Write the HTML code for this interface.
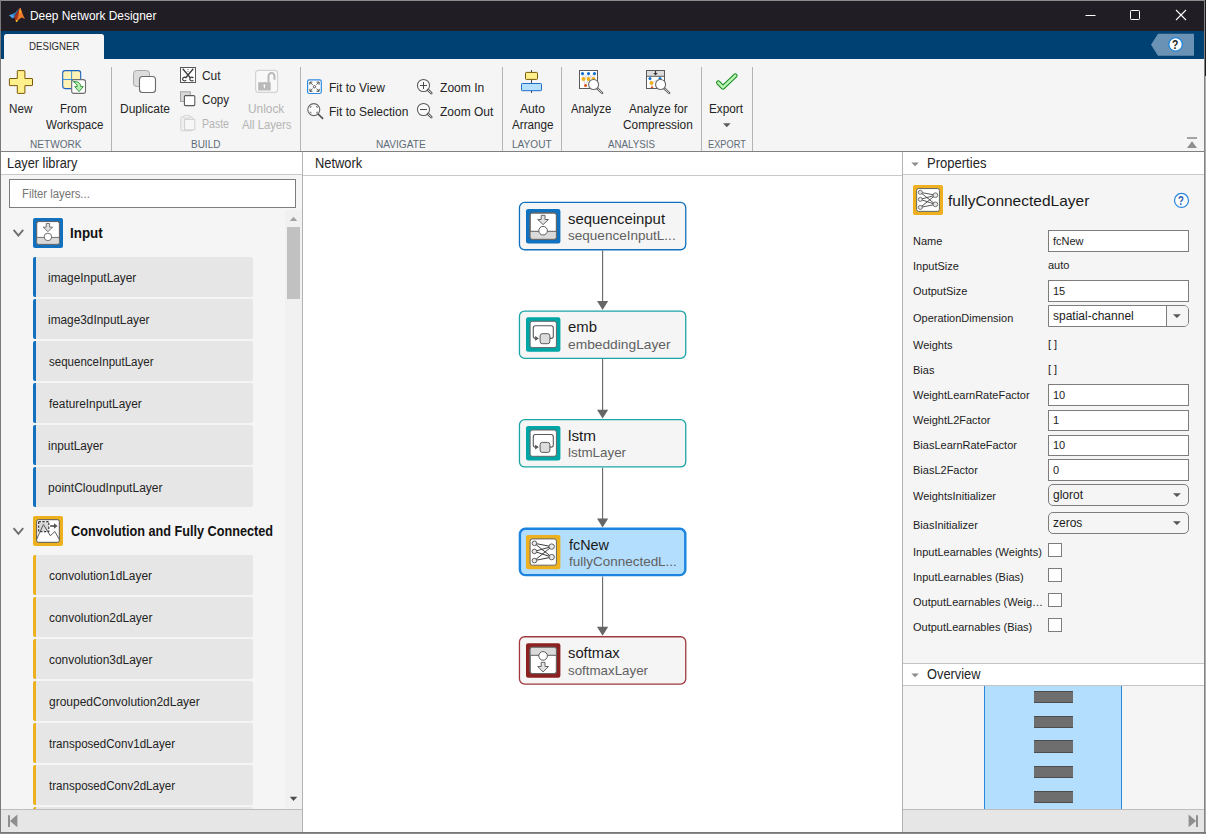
<!DOCTYPE html>
<html lang="en"><head><meta charset="utf-8"><title>Deep Network Designer</title>
<style>

html,body{margin:0;padding:0;}
body{width:1206px;height:834px;overflow:hidden;background:#6b6b6b;position:relative;font-family:"Liberation Sans",sans-serif;}
div,span{box-sizing:border-box;}
.a{position:absolute;}
#win{position:absolute;left:0;top:0;width:1204px;height:832px;background:#f5f5f5;overflow:hidden;}
.t{position:absolute;white-space:nowrap;line-height:20px;transform-origin:0 50%;display:block;font-family:"Liberation Sans",sans-serif;}
.sep{position:absolute;top:67px;width:1px;height:84px;background:#b4b4b4;}
.item{position:absolute;left:33px;width:220px;height:39.5px;background:#e6e6e6;border-radius:2px;}
.item.b{border-left:3px solid #1171be;}
.item.y{border-left:3px solid #edb120;}
.inp{position:absolute;left:1048px;width:141px;background:#fff;border:1px solid #7d7d7d;}
.dd{position:absolute;left:1048px;width:141px;background:#f5f5f5;border:1px solid #7d7d7d;border-radius:5px;}
.cb{position:absolute;left:1048px;width:14px;height:14px;background:#fff;border:1px solid #7d7d7d;}
.node{position:absolute;left:519px;width:167.5px;height:48.5px;background:#f5f5f5;border-radius:6px;}
svg{position:absolute;left:0;top:0;overflow:visible;}

</style></head>
<body>
<div id="win">
<div class="a" style="left:0;top:0;width:1204px;height:31px;background:#201e24;"></div>
<div class="a" style="left:0;top:31px;width:1204px;height:28px;background:#004173;"></div>
<div class="a" style="left:4px;top:34px;width:100px;height:26px;background:#f5f5f5;border-radius:2.5px 2.5px 0 0;"></div>
<div class="a" style="left:0;top:151px;width:1204px;height:1px;background:#808080;"></div>
<div class="sep" style="left:111px;"></div>
<div class="sep" style="left:300px;"></div>
<div class="sep" style="left:502px;"></div>
<div class="sep" style="left:561px;"></div>
<div class="sep" style="left:701px;"></div>
<div class="sep" style="left:752px;"></div>
<div class="a" style="left:1px;top:152px;width:301px;height:22px;background:#fff;"></div>
<div class="a" style="left:1px;top:174px;width:301px;height:1px;background:#c9c9c9;"></div>
<div class="a" style="left:303px;top:152px;width:599px;height:680px;background:#fff;"></div>
<div class="a" style="left:303px;top:175px;width:599px;height:1px;background:#c9c9c9;"></div>
<div class="a" style="left:903px;top:152px;width:301px;height:22px;background:#fff;"></div>
<div class="a" style="left:903px;top:174px;width:301px;height:1px;background:#c9c9c9;"></div>
<div class="a" style="left:302px;top:152px;width:1px;height:680px;background:#b2b2b2;"></div>
<div class="a" style="left:902px;top:152px;width:1px;height:680px;background:#b2b2b2;"></div>
<div class="a" style="left:9px;top:179px;width:287px;height:29px;background:#fff;border:1px solid #7d7d7d;"></div>
<div class="a" style="left:285px;top:210px;width:17px;height:599px;background:#f1f1f1;"></div>
<div class="a" style="left:287px;top:227px;width:13px;height:72px;background:#c1c1c1;"></div>
<div class="item b" style="top:257px;"></div>
<div class="item b" style="top:299px;"></div>
<div class="item b" style="top:341px;"></div>
<div class="item b" style="top:383px;"></div>
<div class="item b" style="top:425px;"></div>
<div class="item b" style="top:467px;"></div>
<div class="item y" style="top:555px;"></div>
<div class="item y" style="top:597px;"></div>
<div class="item y" style="top:639px;"></div>
<div class="item y" style="top:681px;"></div>
<div class="item y" style="top:723px;"></div>
<div class="item y" style="top:765px;"></div>
<div class="item y" style="top:807px;"></div>
<div class="a" style="left:1px;top:809px;width:301px;height:23px;background:#e6e6e6;border-top:1px solid #bdbdbd;"></div>
<div class="a" style="left:903px;top:809px;width:301px;height:23px;background:#e6e6e6;border-top:1px solid #bdbdbd;"></div>
<div class="inp" style="top:230px;height:22px;"></div>
<div class="inp" style="top:280px;height:22px;"></div>
<div class="inp" style="top:384px;height:21.5px;"></div>
<div class="inp" style="top:409.5px;height:21.5px;"></div>
<div class="inp" style="top:434.5px;height:21.5px;"></div>
<div class="inp" style="top:459.3px;height:21.5px;"></div>
<div class="dd" style="top:305px;height:22px;background:#fff;border-radius:0 5px 5px 0;"><div class="a" style="left:117px;top:0;width:22px;height:20px;background:#f5f5f5;border-left:1px solid #7d7d7d;border-radius:0 4px 4px 0;"></div></div>
<div class="dd" style="top:484px;height:22px;"></div>
<div class="dd" style="top:512px;height:22px;"></div>
<div class="cb" style="top:543px;"></div>
<div class="cb" style="top:568px;"></div>
<div class="cb" style="top:593px;"></div>
<div class="cb" style="top:618px;"></div>
<div class="a" style="left:903px;top:663px;width:301px;height:1px;background:#c4c4c4;"></div>
<div class="a" style="left:903px;top:664px;width:301px;height:21px;background:#fff;"></div>
<div class="a" style="left:903px;top:685px;width:301px;height:1px;background:#c4c4c4;"></div>
<div class="a" style="left:984px;top:686px;width:138px;height:123px;background:#b3defe;border-left:1px solid #2b86dc;border-right:1px solid #2b86dc;"></div>
<div class="a" style="left:1033.8px;top:690.8px;width:39.2px;height:12.4px;background:#6e6e6e;border-top:1px solid #4c4c4c;border-bottom:1px solid #4c4c4c;"></div>
<div class="a" style="left:1033.8px;top:715.5px;width:39.2px;height:12.4px;background:#6e6e6e;border-top:1px solid #4c4c4c;border-bottom:1px solid #4c4c4c;"></div>
<div class="a" style="left:1033.8px;top:740.4px;width:39.2px;height:12.4px;background:#6e6e6e;border-top:1px solid #4c4c4c;border-bottom:1px solid #4c4c4c;"></div>
<div class="a" style="left:1033.8px;top:765.5px;width:39.2px;height:12.4px;background:#6e6e6e;border-top:1px solid #4c4c4c;border-bottom:1px solid #4c4c4c;"></div>
<div class="a" style="left:1033.8px;top:790.5px;width:39.2px;height:12.4px;background:#6e6e6e;border-top:1px solid #4c4c4c;border-bottom:1px solid #4c4c4c;"></div>
<div class="a" style="left:903px;top:809px;width:301px;height:23px;background:#e6e6e6;border-top:1px solid #bdbdbd;"></div>
<div class="a" style="left:0;top:0;width:1204px;height:1px;background:#8c8c8c;"></div>
<div class="a" style="left:0;top:0;width:1px;height:832px;background:#7a7a7a;"></div>
<svg width="1206" height="834" viewBox="0 0 1206 834">
<rect x="519.45" y="202.45" width="166.30" height="47.30" rx="5.2" fill="#f5f5f5" stroke="#1171be" stroke-width="1.3"/>
<rect x="519.45" y="311.05" width="166.30" height="47.30" rx="5.2" fill="#f5f5f5" stroke="#1ba5a5" stroke-width="1.3"/>
<rect x="519.45" y="419.65" width="166.30" height="47.30" rx="5.2" fill="#f5f5f5" stroke="#1ba5a5" stroke-width="1.3"/>
<rect x="519.90" y="528.70" width="165.40" height="46.40" rx="5.4" fill="#b3defe" stroke="#1d84de" stroke-width="2.4"/>
<rect x="519.45" y="636.75" width="166.30" height="47.30" rx="5.2" fill="#f5f5f5" stroke="#a2393d" stroke-width="1.3"/>
<line x1="602.6" y1="250.50" x2="602.6" y2="304.00" stroke="#666" stroke-width="1.1"/>
<path d="M597 301.10H608.2L602.6 310.00Z" fill="#666"/>
<line x1="602.6" y1="359.10" x2="602.6" y2="412.60" stroke="#666" stroke-width="1.1"/>
<path d="M597 409.70H608.2L602.6 418.60Z" fill="#666"/>
<line x1="602.6" y1="467.70" x2="602.6" y2="521.40" stroke="#666" stroke-width="1.1"/>
<path d="M597 518.50H608.2L602.6 527.40Z" fill="#666"/>
<line x1="602.6" y1="576.50" x2="602.6" y2="629.70" stroke="#666" stroke-width="1.1"/>
<path d="M597 626.80H608.2L602.6 635.70Z" fill="#666"/>
<rect x="526.00" y="209.00" width="34.40" height="34.40" rx="2.20" fill="#1171be"/>
<clipPath id="c526_209"><rect x="530.10" y="213.00" width="26.30" height="26.30" rx="2.20"/></clipPath>
<rect x="530.10" y="213.00" width="26.30" height="26.30" rx="2.20" fill="#fff" stroke="#666" stroke-width="1"/>
<rect clip-path="url(#c526_209)" x="529.60" y="231.30" width="27.30" height="8.50" fill="#dadada"/>
<line x1="529.60" y1="231.30" x2="556.90" y2="231.30" stroke="#606060" stroke-width="1.00"/>
<rect x="530.10" y="213.00" width="26.30" height="26.30" rx="2.20" fill="none" stroke="#666" stroke-width="1"/>
<circle cx="543.10" cy="230.70" r="4.30" fill="#fff" stroke="#5c5c5c" stroke-width="1.00"/>
<path d="M541.20 215.30H545.00V219.50H548.50L543.10 224.60L537.70 219.50H541.20Z" fill="#e2e2e2" stroke="#646464" stroke-width="1.00" stroke-linejoin="miter"/>
<rect x="526.00" y="317.30" width="34.40" height="34.40" rx="2.20" fill="#00a5a5"/>
<rect x="530.10" y="321.30" width="26.30" height="26.30" rx="2.20" fill="#fff" stroke="#666" stroke-width="1"/>
<path d="M550.00 338.40H551.10Q553.30 338.40 553.30 336.20V328.00Q553.30 325.80 551.10 325.80H535.50Q533.30 325.80 533.30 328.00V336.20Q533.30 338.40 535.50 338.40H536.00" fill="none" stroke="#5a5a5a" stroke-width="1.10"/>
<path d="M535.10 336.00L538.90 338.40L535.10 340.80Z" fill="#555"/>
<rect x="540.10" y="333.70" width="9.80" height="10.00" rx="2.20" fill="#dcdcdc" stroke="#5a5a5a" stroke-width="1.00"/>
<rect x="526.00" y="426.00" width="34.40" height="34.40" rx="2.20" fill="#00a5a5"/>
<rect x="530.10" y="430.00" width="26.30" height="26.30" rx="2.20" fill="#fff" stroke="#666" stroke-width="1"/>
<path d="M550.00 447.10H551.10Q553.30 447.10 553.30 444.90V436.70Q553.30 434.50 551.10 434.50H535.50Q533.30 434.50 533.30 436.70V444.90Q533.30 447.10 535.50 447.10H536.00" fill="none" stroke="#5a5a5a" stroke-width="1.10"/>
<path d="M535.10 444.70L538.90 447.10L535.10 449.50Z" fill="#555"/>
<rect x="540.10" y="442.40" width="9.80" height="10.00" rx="2.20" fill="#dcdcdc" stroke="#5a5a5a" stroke-width="1.00"/>
<rect x="526.00" y="534.90" width="34.40" height="34.40" rx="2.20" fill="#edb120"/>
<rect x="530.10" y="538.90" width="26.30" height="26.30" rx="2.20" fill="#fff" stroke="#666" stroke-width="1"/>
<line x1="534.40" y1="543.30" x2="551.70" y2="546.60" stroke="#3e3e3e" stroke-width="1.00"/>
<line x1="534.40" y1="543.30" x2="551.70" y2="557.10" stroke="#3e3e3e" stroke-width="1.00"/>
<line x1="534.40" y1="551.40" x2="551.70" y2="546.60" stroke="#3e3e3e" stroke-width="1.00"/>
<line x1="534.40" y1="551.40" x2="551.70" y2="557.10" stroke="#3e3e3e" stroke-width="1.00"/>
<line x1="534.40" y1="560.60" x2="551.70" y2="546.60" stroke="#3e3e3e" stroke-width="1.00"/>
<line x1="534.40" y1="560.60" x2="551.70" y2="557.10" stroke="#3e3e3e" stroke-width="1.00"/>
<circle cx="534.40" cy="543.30" r="2.30" fill="#e8e8e8" stroke="#505050" stroke-width="0.90"/>
<circle cx="534.40" cy="551.40" r="2.30" fill="#e8e8e8" stroke="#505050" stroke-width="0.90"/>
<circle cx="534.40" cy="560.60" r="2.30" fill="#e8e8e8" stroke="#505050" stroke-width="0.90"/>
<circle cx="551.70" cy="546.60" r="2.70" fill="#e8e8e8" stroke="#505050" stroke-width="0.90"/>
<circle cx="551.70" cy="557.10" r="2.70" fill="#e8e8e8" stroke="#505050" stroke-width="0.90"/>
<rect x="526.00" y="643.30" width="34.40" height="34.40" rx="2.20" fill="#8c2121"/>
<clipPath id="c526_643"><rect x="530.10" y="647.30" width="26.30" height="26.30" rx="2.20"/></clipPath>
<rect x="530.10" y="647.30" width="26.30" height="26.30" rx="2.20" fill="#fff" stroke="#666" stroke-width="1"/>
<rect clip-path="url(#c526_643)" x="529.60" y="646.80" width="27.30" height="8.50" fill="#dadada"/>
<line x1="529.60" y1="655.30" x2="556.90" y2="655.30" stroke="#606060" stroke-width="1.00"/>
<rect x="530.10" y="647.30" width="26.30" height="26.30" rx="2.20" fill="none" stroke="#666" stroke-width="1"/>
<circle cx="543.10" cy="655.90" r="4.30" fill="#fff" stroke="#5c5c5c" stroke-width="1.00"/>
<path d="M541.20 662.30H545.00V666.50H548.50L543.10 671.90L537.70 666.50H541.20Z" fill="#e2e2e2" stroke="#646464" stroke-width="1.00" stroke-linejoin="miter"/>
<rect x="33.00" y="218.00" width="30.00" height="30.00" rx="1.92" fill="#1171be"/>
<clipPath id="c33_218"><rect x="36.64" y="221.55" width="22.81" height="22.81" rx="1.92"/></clipPath>
<rect x="36.64" y="221.55" width="22.81" height="22.81" rx="1.92" fill="#fff" stroke="#666" stroke-width="1"/>
<rect clip-path="url(#c33_218)" x="36.14" y="237.45" width="23.81" height="7.41" fill="#dadada"/>
<line x1="36.14" y1="237.45" x2="59.95" y2="237.45" stroke="#606060" stroke-width="0.87"/>
<rect x="36.64" y="221.55" width="22.81" height="22.81" rx="1.92" fill="none" stroke="#666" stroke-width="1"/>
<circle cx="47.91" cy="236.92" r="3.75" fill="#fff" stroke="#5c5c5c" stroke-width="0.87"/>
<path d="M46.26 223.49H49.57V227.16H52.62L47.91 231.60L43.20 227.16H46.26Z" fill="#e2e2e2" stroke="#646464" stroke-width="0.87" stroke-linejoin="miter"/>
<rect x="33.00" y="516.00" width="30.00" height="30.00" rx="2" fill="#edb120"/>
<rect x="36.70" y="519.70" width="22.60" height="22.60" rx="1.6" fill="#fff" stroke="#585858" stroke-width="1"/>
<rect x="38.60" y="521.60" width="10.2" height="10" fill="#d9d9d9" stroke="#3a3a3a" stroke-width="1.2" stroke-dasharray="2.3 1.5"/>
<path d="M36.70 539.00L43.40 524.50L50.40 535.80L54.70 531.50L59.40 539.40" fill="none" stroke="#4a4a4a" stroke-width="0.9"/>
<path d="M50.20 526.00H55.00" stroke="#555" stroke-width="1.7"/>
<path d="M54.00 523.30L57.60 526.00L54.00 528.70Z" fill="#555"/>
<rect x="913.00" y="185.00" width="30.00" height="30.00" rx="1.92" fill="#edb120"/>
<rect x="916.64" y="188.55" width="22.81" height="22.81" rx="1.92" fill="#fff" stroke="#666" stroke-width="1"/>
<line x1="920.33" y1="192.33" x2="935.41" y2="195.20" stroke="#3e3e3e" stroke-width="0.87"/>
<line x1="920.33" y1="192.33" x2="935.41" y2="204.36" stroke="#3e3e3e" stroke-width="0.87"/>
<line x1="920.33" y1="199.39" x2="935.41" y2="195.20" stroke="#3e3e3e" stroke-width="0.87"/>
<line x1="920.33" y1="199.39" x2="935.41" y2="204.36" stroke="#3e3e3e" stroke-width="0.87"/>
<line x1="920.33" y1="207.41" x2="935.41" y2="195.20" stroke="#3e3e3e" stroke-width="0.87"/>
<line x1="920.33" y1="207.41" x2="935.41" y2="204.36" stroke="#3e3e3e" stroke-width="0.87"/>
<circle cx="920.33" cy="192.33" r="2.01" fill="#e8e8e8" stroke="#505050" stroke-width="0.78"/>
<circle cx="920.33" cy="199.39" r="2.01" fill="#e8e8e8" stroke="#505050" stroke-width="0.78"/>
<circle cx="920.33" cy="207.41" r="2.01" fill="#e8e8e8" stroke="#505050" stroke-width="0.78"/>
<circle cx="935.41" cy="195.20" r="2.35" fill="#e8e8e8" stroke="#505050" stroke-width="0.78"/>
<circle cx="935.41" cy="204.36" r="2.35" fill="#e8e8e8" stroke="#505050" stroke-width="0.78"/>
<path d="M1085.5 15.5H1095.5" stroke="#fff" stroke-width="1"/>
<rect x="1130.5" y="10.5" width="9" height="9" rx="0.8" fill="none" stroke="#fff" stroke-width="1"/>
<path d="M1176 10L1186 20M1186 10L1176 20" stroke="#fff" stroke-width="1.1"/>
<path d="M8.9 15.3L12.6 13.9L15 13L14.6 16.8L12.6 18.4Z" fill="#4a9fea"/>
<path d="M12.6 13.9L15.3 12.6L18.7 8.7L19.5 8.1L18 11L16 13.8L14.4 17.3L13.4 15.2Z" fill="#2a76b8"/>
<path d="M14.2 17.6L16.2 13.6L18.2 10.6L19.7 7.9L20.2 13L17.6 19L16.4 22.1L15.2 19.6Z" fill="#a9321a"/>
<path d="M19.7 7.9L20.7 8C21.6 11 23 15.4 25 19.3C23.6 18.1 22.4 17.4 21.2 17.8C19.7 18.4 18.3 20.6 16.4 22.2C17.9 18 18.9 13 19.7 7.9Z" fill="#ee7b2c"/>
<ellipse cx="20.2" cy="11.6" rx="0.8" ry="2" fill="#f7b322"/><ellipse cx="16.6" cy="20.9" rx="0.9" ry="1.1" fill="#f8c425"/>
<path d="M1151 44.8L1158 33.8H1194V55.8H1158Z" fill="#6a92b4"/>
<circle cx="1175.6" cy="44.4" r="6.7" fill="#fff" stroke="#1f86dc" stroke-width="1.3"/>
<path d="M1187 138H1197" stroke="#8e8e8e" stroke-width="1.6"/><path d="M1187 148L1192 141.3L1197 148Z" fill="#8e8e8e"/>
<path d="M8 815.3H10V827H8Z" fill="#8e8e8e"/><path d="M17.4 814.6V827.3L9.9 820.9Z" fill="#8e8e8e"/>
<path d="M1196 815.3H1198V827H1196Z" fill="#8e8e8e"/><path d="M1188.6 814.6V827.3L1196.1 820.9Z" fill="#8e8e8e"/>
<path d="M289.8 221L293.5 216.7L297.3 221Z" fill="#a3a3a3"/>
<path d="M289.8 796.8L293.5 801.1L297.3 796.8Z" fill="#505050"/>
<path d="M13.6 229.9L18.4 235.6L23.2 229.9" fill="none" stroke="#6e6e6e" stroke-width="1.9"/>
<path d="M13.6 528.2L18.4 533.9L23.2 528.2" fill="none" stroke="#6e6e6e" stroke-width="1.9"/>
<path d="M911.3 162.4H918.8L915.05 166.3Z" fill="#8c8c8c"/>
<path d="M911.3 673.4H918.8L915.05 677.2Z" fill="#8c8c8c"/>
<path d="M1173 314.3H1180.8L1176.9 318.0Z" fill="#555"/>
<path d="M1173 493.3H1180.8L1176.9 497.0Z" fill="#555"/>
<path d="M1173 521.3H1180.8L1176.9 525.0Z" fill="#555"/>
<path d="M723 123.2H730.6L726.8 127.2Z" fill="#5a5a5a"/>
<circle cx="1181.5" cy="200.4" r="7" fill="#fff" stroke="#2a86de" stroke-width="1.25"/>
<path d="M17.8 70.6H24.4Q24.9 70.6 24.9 71.1V78.5H32Q32.5 78.5 32.5 79V85.1Q32.5 85.6 32 85.6H24.9V92.9Q24.9 93.4 24.4 93.4H17.8Q17.3 93.4 17.3 92.9V85.6H9.9Q9.4 85.6 9.4 85.1V79Q9.4 78.5 9.9 78.5H17.3V71.1Q17.3 70.6 17.8 70.6Z" fill="#fff08c" stroke="#7a5a08" stroke-width="1"/>
<rect x="62.7" y="70.6" width="18" height="18" rx="2.5" fill="#fff3b5" stroke="#1f62bd" stroke-width="1.1"/>
<path d="M71.6 71V88.2M63 79.5H80.5" stroke="#2b8ae0" stroke-width="0.9"/>
<rect x="71.7" y="79.6" width="13.8" height="13.8" rx="2.2" fill="#fff" stroke="#6e6e6e" stroke-width="1.1"/>
<path d="M73.2 81.6C78 81.2 80.6 83 80.8 86.6H83.3L79 91.6L74.7 86.6H77.2C77.2 84.6 76 83.2 73.2 81.6Z" fill="#b7efb0" stroke="#1f8f2a" stroke-width="0.9" stroke-linejoin="round"/>
<rect x="133.5" y="70.5" width="16" height="16" rx="3" fill="#dcdcdc" stroke="#a8a8a8" stroke-width="1"/>
<rect x="139.5" y="76.5" width="16" height="16" rx="3" fill="#fff" stroke="#6a6a6a" stroke-width="1.1"/>
<rect x="180.5" y="67.5" width="15" height="15" fill="#fff" stroke="#585858" stroke-width="1"/>
<path d="M182.7 68.8L190.3 77.7M193.3 68.8L185.7 77.7" stroke="#3c3c3c" stroke-width="1.35" fill="none"/>
<path d="M186.2 78A2 1.75 0 1 0 186.2 80.2M193.4 78A2 1.75 0 1 0 193.4 80.2" stroke="#3c3c3c" stroke-width="1.15" fill="none"/>
<circle cx="188" cy="69.6" r="0.5" fill="#444"/><circle cx="188" cy="71.4" r="0.5" fill="#444"/>
<rect x="180.5" y="91.8" width="9.8" height="9.6" fill="#d9d9d9" stroke="#a2a2a2" stroke-width="1"/>
<rect x="184.4" y="95.6" width="10.4" height="10" rx="1" fill="#fff" stroke="#5a5a5a" stroke-width="1.1"/>
<rect x="180.8" y="116.8" width="11.6" height="14" rx="1" fill="#efefef" stroke="#d2d2d2" stroke-width="1"/>
<rect x="183.6" y="115.4" width="6" height="2.6" rx="0.8" fill="#f1f1f1" stroke="#d2d2d2" stroke-width="0.9"/>
<rect x="184.6" y="119.4" width="10.2" height="10.4" fill="#f7f7f7" stroke="#d0d0d0" stroke-width="1"/>
<rect x="255.6" y="70.4" width="22" height="22" rx="3" fill="#f8f8f8" stroke="#d2d2d2" stroke-width="1.1"/>
<rect x="258.2" y="82.2" width="12.5" height="8.3" fill="#b9b9b9"/>
<path d="M268.5 82.2V76.4A3 3.4 0 0 1 274.5 76.4V79.8" fill="none" stroke="#b9b9b9" stroke-width="2"/>
<circle cx="264.4" cy="85.4" r="1" fill="#fff"/><rect x="263.9" y="85.6" width="1" height="2.6" fill="#fff"/>
<rect x="307.6" y="79.8" width="13.7" height="13.7" rx="1.8" fill="#fff" stroke="#2b8ae0" stroke-width="1.2"/>
<path d="M310.2 82.4L312.6 84.8M318.8 82.4L316.4 84.8M310.2 91L312.6 88.6M318.8 91L316.4 88.6" stroke="#4a4a4a" stroke-width="0.95"/>
<path d="M309.9 84.6V82.1H312.4M316.6 82.1H319.1V84.6M319.1 88.8V91.3H316.6M312.4 91.3H309.9V88.8" fill="none" stroke="#4a4a4a" stroke-width="1.0"/>
<circle cx="314.5" cy="86.7" r="1.15" fill="none" stroke="#444" stroke-width="0.9"/>
<circle cx="313.8" cy="109.6" r="6" fill="#fbfbfb" stroke="#666" stroke-width="1.1"/>
<path d="M318.3 114.2L322.6 118.4" stroke="#4a4a4a" stroke-width="1.6" stroke-linecap="round"/>
<path d="M310.3 107.9V106.6H311.6M316 106.6H317.3V107.9M317.3 111.6V112.9H316M311.6 112.9H310.3V111.6" fill="none" stroke="#777" stroke-width="1"/>
<circle cx="423.5" cy="85.5" r="6.05" fill="#fbfbfb" stroke="#5a5a5a" stroke-width="1.05"/>
<path d="M420 85.5H427" stroke="#4a4a4a" stroke-width="1"/>
<path d="M423.5 82.0V89.0" stroke="#4a4a4a" stroke-width="1"/>
<path d="M428.1 90.0L431.3 93.1" stroke="#5a5a5a" stroke-width="2.6" stroke-linecap="round"/>
<path d="M428.3 90.2L431.1 92.9" stroke="#e4e4e4" stroke-width="1" stroke-linecap="round"/>
<circle cx="423.5" cy="109.5" r="6.05" fill="#fbfbfb" stroke="#5a5a5a" stroke-width="1.05"/>
<path d="M420 109.5H427" stroke="#4a4a4a" stroke-width="1"/>
<path d="M428.1 114.0L431.3 117.1" stroke="#5a5a5a" stroke-width="2.6" stroke-linecap="round"/>
<path d="M428.3 114.2L431.1 116.9" stroke="#e4e4e4" stroke-width="1" stroke-linecap="round"/>
<path d="M531.5 70V93" stroke="#4a4a4a" stroke-width="1"/>
<rect x="525.5" y="72.4" width="12" height="7" rx="0.8" fill="#fff08c" stroke="#7a5a08" stroke-width="1"/>
<rect x="521.5" y="83.5" width="20" height="7.2" rx="0.8" fill="#b5e0ff" stroke="#1f6ec8" stroke-width="1"/>
<rect x="579.5" y="70.5" width="18" height="18" fill="#fff" stroke="#5a5a5a" stroke-width="1"/>
<path d="M582.5 73.5L583.5 79L585.5 85.5L588.5 79L588.5 73.5M582.5 73.5L588.5 79L594.5 73.5L593.5 79M588.5 73.5L583.5 79M588.5 73.5L593.5 79" fill="none" stroke="#c9c9c9" stroke-width="0.8"/>
<circle cx="582.5" cy="73.6" r="1.6" fill="#1171d0"/>
<circle cx="588.5" cy="73.6" r="1.6" fill="#1171d0"/>
<circle cx="594.5" cy="73.6" r="1.6" fill="#1171d0"/>
<circle cx="583.5" cy="79" r="2" fill="#edb120"/>
<circle cx="588.5" cy="79" r="2" fill="#edb120"/>
<circle cx="593.5" cy="79" r="2" fill="#edb120"/>
<circle cx="585.5" cy="85.5" r="1.5" fill="#e2521a"/>
<path d="M597.2 88.3L602.2 93" stroke="#5e5e5e" stroke-width="2.4" stroke-linecap="round"/>
<path d="M597.6 88.7L602 92.8" stroke="#e6e6e6" stroke-width="0.9" stroke-linecap="round"/>
<circle cx="593.6" cy="84.5" r="5" fill="#fff" stroke="#6a6a6a" stroke-width="1.1"/>
<rect x="646.5" y="70.5" width="18" height="18" fill="#fff" stroke="#5a5a5a" stroke-width="1"/>
<rect x="647" y="71" width="17" height="5" fill="#dcdcdc"/>
<path d="M646.5 76.3H664.5" stroke="#5a5a5a" stroke-width="1"/>
<path d="M655.5 71V73.2" stroke="#333" stroke-width="1.2"/><path d="M653.3 72.9H657.7L655.5 75.4Z" fill="#333"/>
<path d="M650 78.5L651.5 83L652 87.5M660 78.5L651.5 83" fill="none" stroke="#c9c9c9" stroke-width="0.8"/>
<circle cx="650" cy="78.4" r="1.5" fill="#1171d0"/><circle cx="660" cy="78.4" r="1.5" fill="#1171d0"/>
<circle cx="651.5" cy="83" r="2" fill="#edb120"/>
<path d="M650.5 88L652 85.8L653.5 88Z" fill="#e2521a"/>
<path d="M664.2 88.3L669.2 93" stroke="#5e5e5e" stroke-width="2.4" stroke-linecap="round"/>
<path d="M664.6 88.7L669 92.8" stroke="#e6e6e6" stroke-width="0.9" stroke-linecap="round"/>
<circle cx="660.6" cy="84.5" r="5" fill="#fff" stroke="#6a6a6a" stroke-width="1.1"/>
<path d="M718.3 82.6L723 87.4L735.3 75.6" fill="none" stroke="#178a20" stroke-width="4.6" stroke-linecap="round" stroke-linejoin="round"/>
<path d="M718.3 82.6L723 87.4L735.3 75.6" fill="none" stroke="#b9f4b4" stroke-width="2.5" stroke-linecap="round" stroke-linejoin="round"/>
</svg>
</div>
<div class="a" style="left:1204px;top:0;width:1px;height:834px;background:#828282;"></div><div class="a" style="left:1205px;top:0;width:1px;height:834px;background:#b0b0b0;"></div><div class="a" style="left:1205px;top:0;width:1px;height:76px;background:#1d1d1d;"></div><div class="a" style="left:0;top:832px;width:1206px;height:1px;background:#787878;"></div><div class="a" style="left:0;top:833px;width:1206px;height:1px;background:#8a8a8a;"></div>
<div id="texts">
<span class="t" id="t0" style="left:30.00px;top:6px;font-size:12px;color:#ffffff;transform:scaleX(0.9920);">Deep Network Designer</span>
<span class="t" id="t1" style="left:29.00px;top:36px;font-size:11.5px;color:#2b2b2b;transform:scaleX(0.8416);">DESIGNER</span>
<span class="t" id="t2" style="left:9.00px;top:99px;font-size:12px;color:#242424;transform:scaleX(0.9712);">New</span>
<span class="t" id="t3" style="left:60.00px;top:99px;font-size:12px;color:#242424;transform:scaleX(0.9561);">From</span>
<span class="t" id="t4" style="left:46.00px;top:115px;font-size:12px;color:#242424;transform:scaleX(0.9596);">Workspace</span>
<span class="t" id="t5" style="left:120.00px;top:99px;font-size:12px;color:#242424;">Duplicate</span>
<span class="t" id="t6" style="left:202.00px;top:66px;font-size:12px;color:#242424;transform:scaleX(0.9931);">Cut</span>
<span class="t" id="t7" style="left:202.00px;top:90px;font-size:12px;color:#242424;transform:scaleX(0.9675);">Copy</span>
<span class="t" id="t8" style="left:329.00px;top:78px;font-size:12px;color:#242424;">Fit to View</span>
<span class="t" id="t9" style="left:329.00px;top:102px;font-size:12px;color:#242424;">Fit to Selection</span>
<span class="t" id="t10" style="left:440.00px;top:78px;font-size:12px;color:#242424;transform:scaleX(1.0066);">Zoom In</span>
<span class="t" id="t11" style="left:440.00px;top:102px;font-size:12px;color:#242424;">Zoom Out</span>
<span class="t" id="t12" style="left:520.00px;top:99px;font-size:12px;color:#242424;transform:scaleX(1.0111);">Auto</span>
<span class="t" id="t13" style="left:512.00px;top:115px;font-size:12px;color:#242424;transform:scaleX(0.9710);">Arrange</span>
<span class="t" id="t14" style="left:571.00px;top:99px;font-size:12px;color:#242424;transform:scaleX(0.9407);">Analyze</span>
<span class="t" id="t15" style="left:629.00px;top:99px;font-size:12px;color:#242424;transform:scaleX(0.9757);">Analyze for</span>
<span class="t" id="t16" style="left:623.00px;top:115px;font-size:12px;color:#242424;transform:scaleX(0.9874);">Compression</span>
<span class="t" id="t17" style="left:709.00px;top:99px;font-size:12px;color:#242424;transform:scaleX(0.9791);">Export</span>
<span class="t" id="t18" style="left:202.00px;top:114px;font-size:12px;color:#b4b4b4;transform:scaleX(0.8775);">Paste</span>
<span class="t" id="t19" style="left:248.00px;top:99px;font-size:12px;color:#b4b4b4;transform:scaleX(0.9900);">Unlock</span>
<span class="t" id="t20" style="left:242.00px;top:115px;font-size:12px;color:#b4b4b4;transform:scaleX(0.9393);">All Layers</span>
<span class="t" id="t21" style="left:30.00px;top:134px;font-size:10.8px;color:#5f6b77;transform:scaleX(0.9336);">NETWORK</span>
<span class="t" id="t22" style="left:191.00px;top:134px;font-size:10.8px;color:#5f6b77;transform:scaleX(0.9250);">BUILD</span>
<span class="t" id="t23" style="left:376.00px;top:134px;font-size:10.8px;color:#5f6b77;transform:scaleX(0.9375);">NAVIGATE</span>
<span class="t" id="t24" style="left:512.00px;top:134px;font-size:10.8px;color:#5f6b77;transform:scaleX(0.9329);">LAYOUT</span>
<span class="t" id="t25" style="left:608.00px;top:134px;font-size:10.8px;color:#5f6b77;transform:scaleX(0.9028);">ANALYSIS</span>
<span class="t" id="t26" style="left:708.00px;top:134px;font-size:10.8px;color:#5f6b77;transform:scaleX(0.8546);">EXPORT</span>
<span class="t" id="t27" style="left:7.00px;top:153px;font-size:14px;color:#242424;transform:scaleX(0.9152);">Layer library</span>
<span class="t" id="t28" style="left:315.00px;top:153px;font-size:14px;color:#242424;transform:scaleX(0.9179);">Network</span>
<span class="t" id="t29" style="left:927.00px;top:153px;font-size:14px;color:#242424;transform:scaleX(0.9308);">Properties</span>
<span class="t" id="t30" style="left:927.00px;top:664px;font-size:14px;color:#242424;transform:scaleX(0.9158);">Overview</span>
<span class="t" id="t31" style="left:22.00px;top:184px;font-size:12px;color:#757575;transform:scaleX(0.9411);">Filter layers...</span>
<span class="t" id="t32" style="left:70.00px;top:223px;font-size:14px;color:#111;font-weight:700;transform:scaleX(0.9553);">Input</span>
<span class="t" id="t33" style="left:71.00px;top:521px;font-size:14px;color:#111;font-weight:700;transform:scaleX(0.9053);">Convolution and Fully Connected</span>
<span class="t" id="t34" style="left:48.00px;top:268px;font-size:12px;color:#242424;transform:scaleX(0.9880);">imageInputLayer</span>
<span class="t" id="t35" style="left:48.00px;top:310px;font-size:12px;color:#242424;transform:scaleX(0.9872);">image3dInputLayer</span>
<span class="t" id="t36" style="left:49.00px;top:352px;font-size:12px;color:#242424;transform:scaleX(0.9611);">sequenceInputLayer</span>
<span class="t" id="t37" style="left:49.00px;top:394px;font-size:12px;color:#242424;transform:scaleX(0.9849);">featureInputLayer</span>
<span class="t" id="t38" style="left:48.00px;top:436px;font-size:12px;color:#242424;transform:scaleX(0.9867);">inputLayer</span>
<span class="t" id="t39" style="left:48.00px;top:478px;font-size:12px;color:#242424;transform:scaleX(1.0043);">pointCloudInputLayer</span>
<span class="t" id="t40" style="left:49.00px;top:566px;font-size:12px;color:#242424;transform:scaleX(0.9891);">convolution1dLayer</span>
<span class="t" id="t41" style="left:49.00px;top:608px;font-size:12px;color:#242424;transform:scaleX(0.9934);">convolution2dLayer</span>
<span class="t" id="t42" style="left:49.00px;top:650px;font-size:12px;color:#242424;transform:scaleX(0.9934);">convolution3dLayer</span>
<span class="t" id="t43" style="left:49.00px;top:692px;font-size:12px;color:#242424;">groupedConvolution2dLayer</span>
<span class="t" id="t44" style="left:49.00px;top:734px;font-size:12px;color:#242424;transform:scaleX(0.9640);">transposedConv1dLayer</span>
<span class="t" id="t45" style="left:49.00px;top:776px;font-size:12px;color:#242424;transform:scaleX(0.9640);">transposedConv2dLayer</span>
<span class="t" id="t46" style="left:568.00px;top:209px;font-size:15px;color:#1a1a1a;transform:scaleX(0.9946);">sequenceinput</span>
<span class="t" id="t47" style="left:568.00px;top:226px;font-size:13px;color:#616161;transform:scaleX(1.0414);">sequenceInputL...</span>
<span class="t" id="t48" style="left:568.00px;top:317px;font-size:15px;color:#1a1a1a;transform:scaleX(0.9932);">emb</span>
<span class="t" id="t49" style="left:568.00px;top:335px;font-size:13px;color:#616161;transform:scaleX(1.0595);">embeddingLayer</span>
<span class="t" id="t50" style="left:568.00px;top:426px;font-size:15px;color:#1a1a1a;transform:scaleX(1.0189);">lstm</span>
<span class="t" id="t51" style="left:568.00px;top:443px;font-size:13px;color:#616161;transform:scaleX(1.0308);">lstmLayer</span>
<span class="t" id="t52" style="left:569.00px;top:535px;font-size:15px;color:#1a1a1a;transform:scaleX(0.9598);">fcNew</span>
<span class="t" id="t53" style="left:569.00px;top:552px;font-size:13px;color:#616161;transform:scaleX(1.0363);">fullyConnectedL...</span>
<span class="t" id="t54" style="left:568.00px;top:643px;font-size:15px;color:#1a1a1a;transform:scaleX(0.9851);">softmax</span>
<span class="t" id="t55" style="left:568.00px;top:661px;font-size:13px;color:#616161;transform:scaleX(1.0253);">softmaxLayer</span>
<span class="t" id="t56" style="left:948.00px;top:191px;font-size:15px;color:#1a1a1a;transform:scaleX(1.0334);">fullyConnectedLayer</span>
<span class="t" id="t57" style="left:913.00px;top:231px;font-size:11px;color:#1c1c1c;">Name</span>
<span class="t" id="t58" style="left:913.00px;top:256px;font-size:11px;color:#1c1c1c;">InputSize</span>
<span class="t" id="t59" style="left:913.00px;top:281px;font-size:11px;color:#1c1c1c;">OutputSize</span>
<span class="t" id="t60" style="left:913.00px;top:308px;font-size:11px;color:#1c1c1c;">OperationDimension</span>
<span class="t" id="t61" style="left:913.00px;top:335px;font-size:11px;color:#1c1c1c;">Weights</span>
<span class="t" id="t62" style="left:913.00px;top:360px;font-size:11px;color:#1c1c1c;">Bias</span>
<span class="t" id="t63" style="left:913.00px;top:385px;font-size:11px;color:#1c1c1c;">WeightLearnRateFactor</span>
<span class="t" id="t64" style="left:913.00px;top:410px;font-size:11px;color:#1c1c1c;">WeightL2Factor</span>
<span class="t" id="t65" style="left:913.00px;top:435px;font-size:11px;color:#1c1c1c;">BiasLearnRateFactor</span>
<span class="t" id="t66" style="left:913.00px;top:460px;font-size:11px;color:#1c1c1c;">BiasL2Factor</span>
<span class="t" id="t67" style="left:913.00px;top:486px;font-size:11px;color:#1c1c1c;">WeightsInitializer</span>
<span class="t" id="t68" style="left:913.00px;top:515px;font-size:11px;color:#1c1c1c;">BiasInitializer</span>
<span class="t" id="t69" style="left:913.00px;top:542px;font-size:11px;color:#1c1c1c;">InputLearnables (Weights)</span>
<span class="t" id="t70" style="left:913.00px;top:567px;font-size:11px;color:#1c1c1c;">InputLearnables (Bias)</span>
<span class="t" id="t71" style="left:913.00px;top:592px;font-size:11px;color:#1c1c1c;">OutputLearnables (Weig…</span>
<span class="t" id="t72" style="left:913.00px;top:617px;font-size:11px;color:#1c1c1c;">OutputLearnables (Bias)</span>
<span class="t" id="t73" style="left:1053.00px;top:231px;font-size:11px;color:#1c1c1c;">fcNew</span>
<span class="t" id="t74" style="left:1048.00px;top:255px;font-size:11px;color:#1c1c1c;">auto</span>
<span class="t" id="t75" style="left:1053.00px;top:281px;font-size:11px;color:#1c1c1c;">15</span>
<span class="t" id="t76" style="left:1048.00px;top:334px;font-size:11px;color:#1c1c1c;">[ ]</span>
<span class="t" id="t77" style="left:1048.00px;top:359px;font-size:11px;color:#1c1c1c;">[ ]</span>
<span class="t" id="t78" style="left:1053.00px;top:385px;font-size:11px;color:#1c1c1c;">10</span>
<span class="t" id="t79" style="left:1053.00px;top:410px;font-size:11px;color:#1c1c1c;">1</span>
<span class="t" id="t80" style="left:1053.00px;top:435px;font-size:11px;color:#1c1c1c;">10</span>
<span class="t" id="t81" style="left:1053.00px;top:460px;font-size:11px;color:#1c1c1c;">0</span>
<span class="t" id="t82" style="left:1053.00px;top:306px;font-size:12px;color:#1c1c1c;">spatial-channel</span>
<span class="t" id="t83" style="left:1053.00px;top:485px;font-size:12px;color:#1c1c1c;">glorot</span>
<span class="t" id="t84" style="left:1053.00px;top:513px;font-size:12px;color:#1c1c1c;">zeros</span>
<span class="t" id="t85" style="left:1172.00px;top:35px;font-size:12px;color:#1a1a1a;font-weight:700;transform:scaleX(0.8641);">?</span>
<span class="t" id="t86" style="left:1178.00px;top:191px;font-size:12.5px;color:#2458aa;font-weight:700;transform:scaleX(0.7581);">?</span>
</div>
</body></html>
